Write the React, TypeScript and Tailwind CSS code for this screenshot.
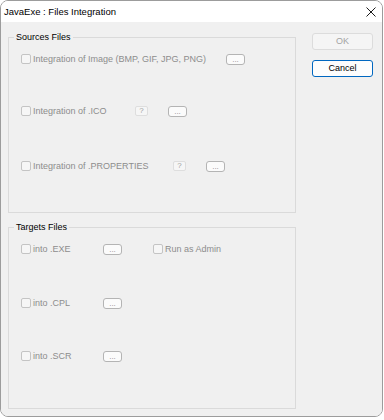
import type { ReactNode } from 'react';

const font = { fontFamily: '"Liberation Sans", Arial, sans-serif' };

function Check({ label, className }: { label: string; className?: string }) {
  return (
    <div className={'flex items-center gap-[2px] ' + (className ?? '')}>
      <span className="h-[10px] w-[10px] shrink-0 rounded-[2px] border border-[#c4c4c4] bg-[#f6f6f6]" />
      <span className="whitespace-nowrap text-[#8d8d8d]">{label}</span>
    </div>
  );
}

function Dots({ className }: { className?: string }) {
  return (
    <span
      className={
        'flex h-[11px] w-[19px] shrink-0 items-end justify-center rounded-[3px] border border-[#b4b4b4] bg-[#fbfbfb] text-[8px] leading-[9px] text-[#8d8d8d] ' +
        (className ?? '')
      }
    >
      ...
    </span>
  );
}

function Help() {
  return (
    <span className="flex h-[10px] w-[13px] shrink-0 items-center justify-center rounded-[2px] border border-[#dedede] bg-[#f6f6f6] text-[8px] leading-[8px] text-[#a2a2a2]">
      ?
    </span>
  );
}

function Group({ title, className, children }: { title: string; className: string; children: ReactNode }) {
  return (
    <fieldset className={'flex flex-col border border-[#dadada] pl-[12px] ' + className}>
      <legend className="-ml-[7px] px-[2px] leading-[11px] text-black">{title}</legend>
      {children}
    </fieldset>
  );
}

export default function App() {
  return (
    <div className="h-[420px] w-[384px] bg-white text-[9px] leading-[11px]" style={font}>
      <div className="flex h-[417px] w-[383px] flex-col overflow-hidden rounded-[8px] border border-[#9c9c9c]">
        <div className="flex h-[21px] shrink-0 items-center justify-between bg-white pl-[3px] pr-[6px]">
          <span className="text-[9.5px] text-black">JavaExe : Files Integration</span>
          <svg width="10" height="10" viewBox="0 0 10 10" className="mt-[1px]">
            <path d="M0.5 0.5 L9.5 9.5 M9.5 0.5 L0.5 9.5" stroke="#1a1a1a" strokeWidth="1" />
          </svg>
        </div>

        <div className="flex flex-1 bg-[#f0f0f0] pl-[7px] pt-[10px]">
          <div className="flex w-[288px] flex-col">
            <Group title="Sources Files" className="h-[181px]">
              <div className="mt-[10px] flex h-[12px] items-center">
                <Check label="Integration of Image (BMP, GIF, JPG, PNG)" className="w-[205px]" />
                <Dots />
              </div>
              <div className="mt-[40px] flex h-[12px] items-center">
                <Check label="Integration of .ICO" className="w-[114px]" />
                <Help />
                <Dots className="ml-[20px]" />
              </div>
              <div className="mt-[43px] flex h-[12px] items-center">
                <Check label="Integration of .PROPERTIES" className="w-[152px]" />
                <Help />
                <Dots className="ml-[20px]" />
              </div>
            </Group>

            <Group title="Targets Files" className="mt-[9px] h-[187px]">
              <div className="mt-[10px] flex h-[12px] items-center">
                <Check label="into .EXE" className="w-[82px]" />
                <Dots />
                <Check label="Run as Admin" className="ml-[31px]" />
              </div>
              <div className="mt-[42px] flex h-[12px] items-center">
                <Check label="into .CPL" className="w-[82px]" />
                <Dots />
              </div>
              <div className="mt-[41px] flex h-[12px] items-center">
                <Check label="into .SCR" className="w-[82px]" />
                <Dots />
              </div>
            </Group>
          </div>

          <div className="ml-[16px] flex flex-col gap-[10px] pt-[1px]">
            <button className="h-[17px] w-[61px] rounded-[3px] border border-[#dcdcdc] bg-[#f5f5f5] text-[9px] text-[#a3a3a3]">
              OK
            </button>
            <button className="h-[17px] w-[61px] rounded-[3px] border border-[#0067c0] bg-[#fdfdfd] text-[9px] text-black">
              Cancel
            </button>
          </div>
        </div>
      </div>
    </div>
  );
}
